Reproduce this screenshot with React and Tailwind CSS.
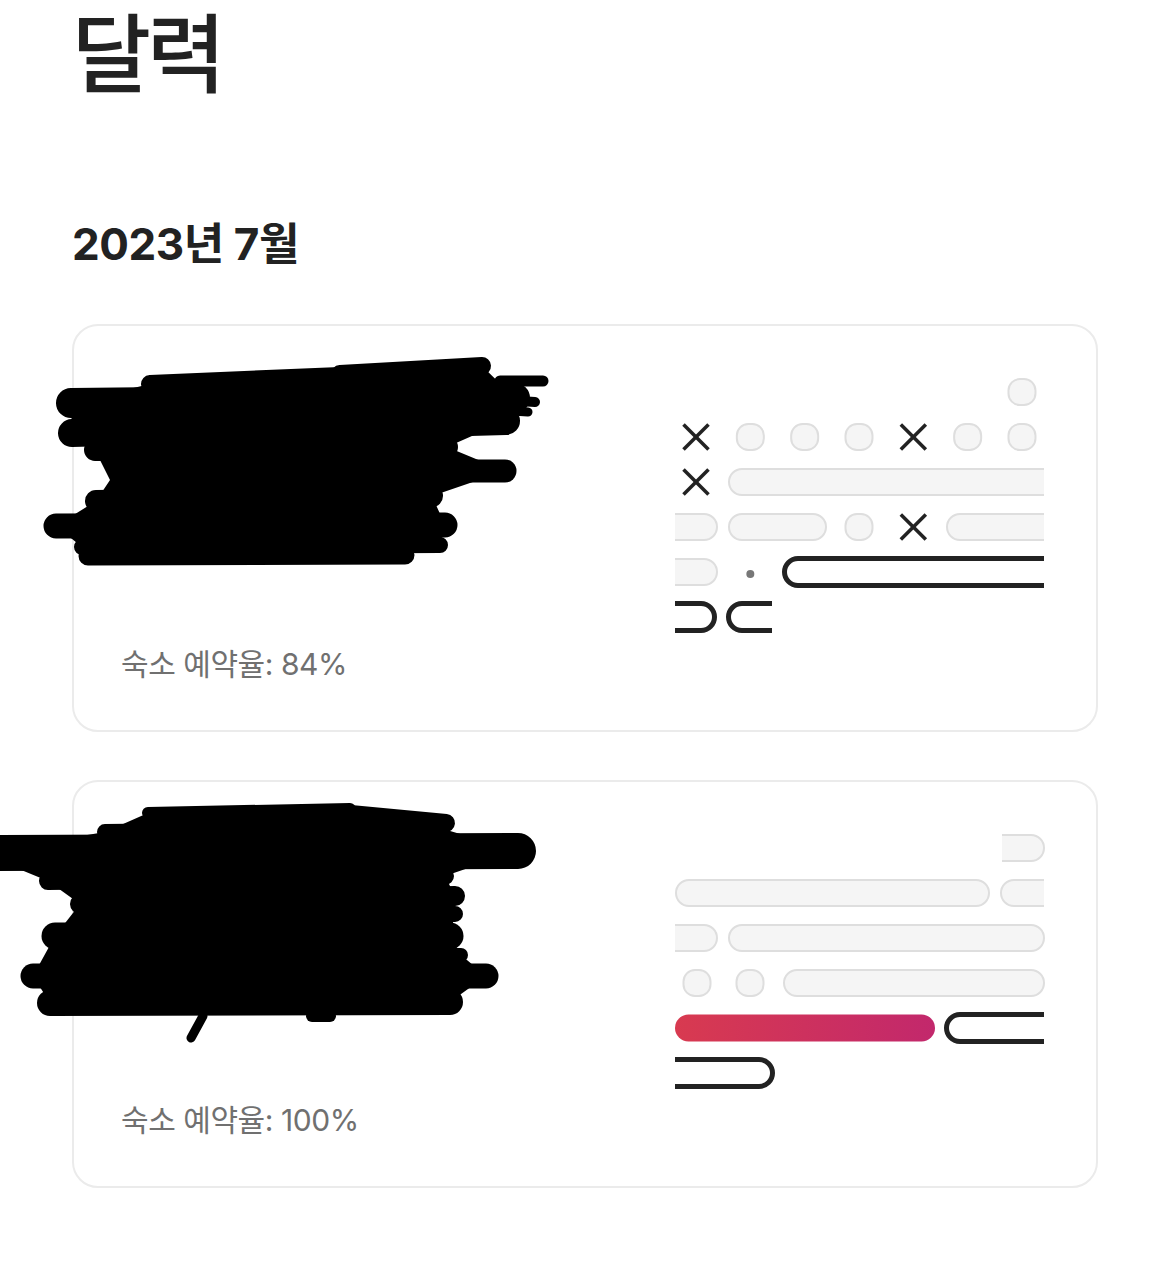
import React from "react";

const GRAY_FILL = "#f5f5f5";
const GRAY_STROKE = "#dedede";
const BLACK = "#222222";

function shapePaths({ x1, x2, cy, left, right, sw, hh }) {
  const top = cy - hh;
  const bot = cy + hh;
  const L = left === "round" ? x1 + sw / 2 : x1;
  const R = right === "round" ? x2 - sw / 2 : x2;
  const sx = left === "round" ? L + hh : L;
  const ex = right === "round" ? R - hh : R;
  let stroke = `M ${sx} ${top} H ${ex} `;
  let fill = `M ${sx} ${top} H ${ex} `;
  if (right === "round") {
    stroke += `A ${hh} ${hh} 0 0 1 ${ex} ${bot} `;
    fill += `A ${hh} ${hh} 0 0 1 ${ex} ${bot} `;
  } else {
    stroke += `M ${R} ${bot} `;
    fill += `L ${R} ${bot} `;
  }
  stroke += `H ${sx} `;
  fill += `H ${sx} `;
  if (left === "round") {
    stroke += `A ${hh} ${hh} 0 0 1 ${sx} ${top}`;
    fill += `A ${hh} ${hh} 0 0 1 ${sx} ${top}`;
  }
  fill += " Z";
  return { stroke, fill };
}

function Bar({ x1, x2, cy, left = "round", right = "round", kind = "gray" }) {
  const sw = kind === "gray" ? 2 : 5;
  const hh = kind === "gray" ? 13 : 13.5;
  const { stroke, fill } = shapePaths({ x1, x2, cy, left, right, sw, hh });
  return (
    <g>
      <path d={fill} fill={kind === "gray" ? GRAY_FILL : "#ffffff"} />
      <path
        d={stroke}
        fill="none"
        stroke={kind === "gray" ? GRAY_STROKE : BLACK}
        strokeWidth={sw}
        strokeLinecap="butt"
      />
    </g>
  );
}

function Cell({ cx, cy }) {
  return (
    <rect
      x={cx - 13.5}
      y={cy - 13}
      width={27}
      height={26}
      rx={11.5}
      fill={GRAY_FILL}
      stroke={GRAY_STROKE}
      strokeWidth={2}
    />
  );
}

function Cross({ cx, cy }) {
  const d = 12.5;
  return (
    <g stroke={BLACK} strokeWidth={3.6} strokeLinecap="butt">
      <line x1={cx - d} y1={cy - d} x2={cx + d} y2={cy + d} />
      <line x1={cx + d} y1={cy - d} x2={cx - d} y2={cy + d} />
    </g>
  );
}

const col = (c) => 21 + 54.33 * c;
const row = (r) => 14 + 45 * r;

function CalendarOne() {
  return (
    <svg width="370" height="262" viewBox="0 0 370 262" className="block">
      <Cell cx={col(6)} cy={row(0)} />
      <Cross cx={col(0)} cy={row(1)} />
      <Cell cx={col(1)} cy={row(1)} />
      <Cell cx={col(2)} cy={row(1)} />
      <Cell cx={col(3)} cy={row(1)} />
      <Cross cx={col(4)} cy={row(1)} />
      <Cell cx={col(5)} cy={row(1)} />
      <Cell cx={col(6)} cy={row(1)} />
      <Cross cx={col(0)} cy={row(2)} />
      <Bar x1={53} x2={369} cy={row(2)} right="open" />
      <Bar x1={0} x2={43} cy={row(3)} left="open" />
      <Bar x1={53} x2={152} cy={row(3)} />
      <Cell cx={col(3)} cy={row(3)} />
      <Cross cx={col(4)} cy={row(3)} />
      <Bar x1={271} x2={369} cy={row(3)} right="open" />
      <Bar x1={0} x2={43} cy={row(4)} left="open" />
      <circle cx={col(1)} cy={row(4) + 2} r={4} fill="#777777" />
      <Bar x1={107} x2={369} cy={row(4)} right="open" kind="black" />
      <Bar x1={0} x2={42} cy={row(5)} left="open" kind="black" />
      <Bar x1={51} x2={97} cy={row(5)} right="open" kind="black" />
    </svg>
  );
}

function CalendarTwo() {
  return (
    <svg width="370" height="262" viewBox="0 0 370 262" className="block">
      <defs>
        <linearGradient id="hotGrad" x1="0" y1="0" x2="1" y2="0">
          <stop offset="0" stopColor="#d83a50" />
          <stop offset="1" stopColor="#c2286c" />
        </linearGradient>
      </defs>
      <Bar x1={327} x2={370} cy={row(0)} left="open" />
      <Bar x1={0} x2={315} cy={row(1)} />
      <Bar x1={325} x2={369} cy={row(1)} right="open" />
      <Bar x1={0} x2={43} cy={row(2)} left="open" />
      <Bar x1={53} x2={370} cy={row(2)} />
      <Cell cx={22} cy={row(3)} />
      <Cell cx={75} cy={row(3)} />
      <Bar x1={108} x2={370} cy={row(3)} />
      <rect x={0} y={row(4) - 13.5} width={260} height={27} rx={13.5} fill="url(#hotGrad)" />
      <Bar x1={269} x2={369} cy={row(4)} right="open" kind="black" />
      <Bar x1={0} x2={100} cy={row(5)} left="open" kind="black" />
    </svg>
  );
}

function Scribble({ strokes, fill, viewBox, className }) {
  return (
    <svg className={className} viewBox={viewBox} aria-hidden="true">
      <polygon points={fill} fill="#000" />
      {strokes.map(([x1, y1, x2, y2, w], i) => (
        <line
          key={i}
          x1={x1}
          y1={y1}
          x2={x2}
          y2={y2}
          stroke="#000"
          strokeWidth={w}
          strokeLinecap="round"
        />
      ))}
    </svg>
  );
}

const scribbleOne = {
  strokes: [
    [150, 384, 340, 376, 18],
    [340, 374, 482, 366, 18],
    [500, 381, 543, 381, 11],
    [470, 398, 535, 402, 10],
    [470, 408, 528, 412, 9],
    [71, 403, 515, 398, 30],
    [72, 433, 506, 421, 28],
    [95, 450, 447, 447, 22],
    [128, 471, 505, 471, 23],
    [96, 501, 432, 496, 22],
    [56, 526, 445, 525, 25],
    [82, 547, 440, 545, 16],
    [88, 556, 405, 555, 19],
  ],
  fill:
    "150,384 340,374 482,366 515,398 506,421 447,447 505,471 432,496 445,525 440,545 405,555 88,556 82,547 56,526 96,501 110,480 95,450 72,433 71,403",
};

const scribbleTwo = {
  strokes: [
    [148, 813, 350, 809, 12],
    [340, 813, 446, 823, 18],
    [105, 832, 440, 828, 16],
    [-20, 853, 518, 851, 36],
    [48, 881, 445, 876, 18],
    [80, 904, 455, 896, 20],
    [300, 915, 455, 914, 16],
    [55, 936, 450, 936, 27],
    [300, 955, 461, 955, 14],
    [33, 976, 486, 976, 25],
    [50, 1003, 450, 1002, 26],
    [312, 1016, 330, 1016, 12],
    [203, 1016, 191, 1038, 9],
  ],
  fill:
    "148,813 350,809 446,823 440,828 518,851 445,876 455,896 455,914 450,936 461,955 486,976 450,1002 50,1003 33,976 55,936 80,904 48,881 -20,853 105,832",
};

function Card({ rate, calendar, scribble, scribbleTop, viewBox }) {
  return (
    <div className="relative flex h-[408px] rounded-[26px] border-2 border-[#ebebeb] bg-white">
      <div className="flex flex-1 flex-col justify-end pb-[48px] pl-[47px]">
        <p className="text-[30px] leading-[36px] tracking-[-0.015em] text-[#707070]">숙소 예약율: {rate}</p>
      </div>
      <div className="pr-[51px] pt-[52px]">{calendar}</div>
      <Scribble
        strokes={scribble.strokes}
        fill={scribble.fill}
        viewBox={viewBox}
        className={`pointer-events-none absolute left-[-74px] w-[560px] ${scribbleTop}`}
      />
    </div>
  );
}

export default function App() {
  return (
    <div className="min-h-screen bg-white px-[72px] pb-[83px] font-['Inter','Noto_Sans_CJK_KR',sans-serif] text-[#222222]">
      <h1 className="pt-[12px] text-[86px] font-medium leading-none tracking-[-0.05em]">달력</h1>
      <h2 className="mt-[124px] text-[44px] font-bold leading-none tracking-[-0.01em]">2023년 7월</h2>
      <div className="mt-[58px] flex flex-col gap-[48px]">
        <Card
          rate="84%"
          calendar={<CalendarOne />}
          scribble={scribbleOne}
          viewBox="0 340 560 240"
          scribbleTop="top-[14px] h-[240px]"
        />
        <Card
          rate="100%"
          calendar={<CalendarTwo />}
          scribble={scribbleTwo}
          viewBox="0 795 560 260"
          scribbleTop="top-[13px] h-[260px]"
        />
      </div>
    </div>
  );
}
